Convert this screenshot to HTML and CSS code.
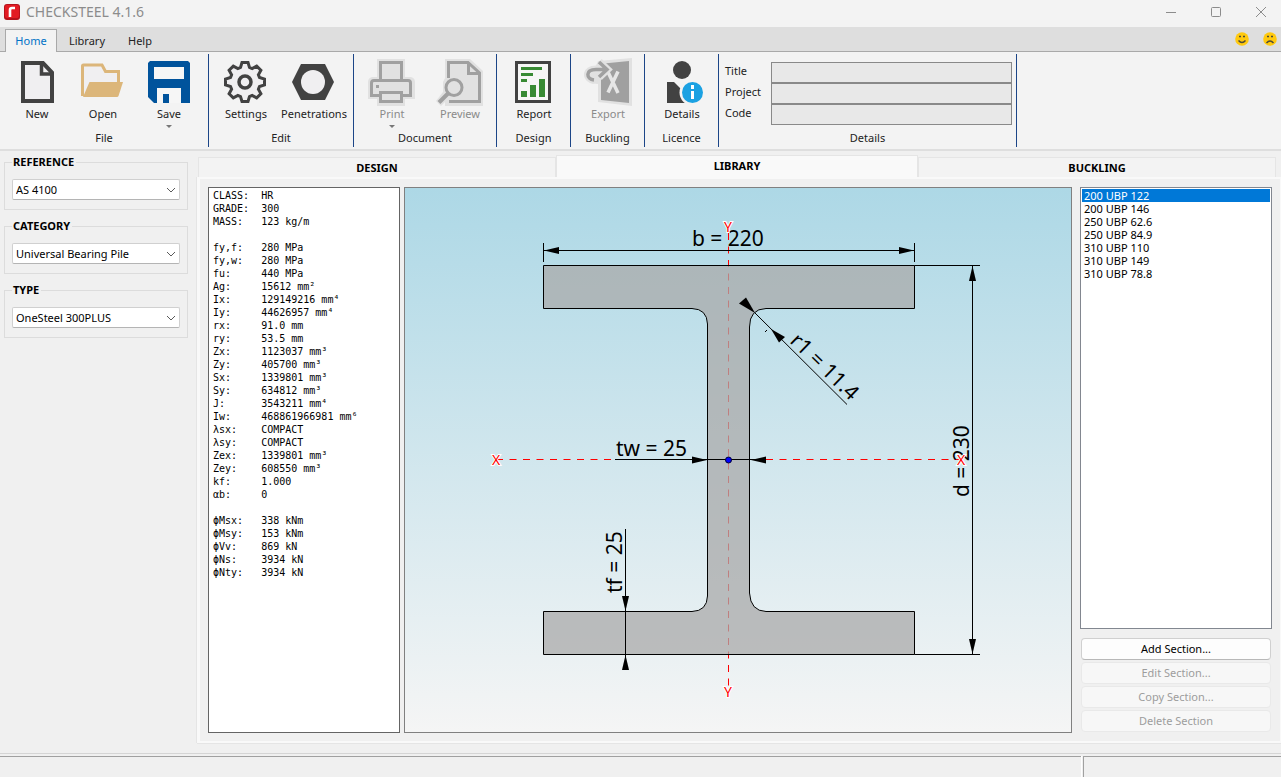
FILE: index.html
```html
<!DOCTYPE html>
<html lang="en">
<head>
<meta charset="utf-8">
<title>CHECKSTEEL 4.1.6</title>
<link rel="stylesheet" href="styles.css">
</head>
<body>
<header class="titlebar">
  <svg class="app-icon" width="16" height="16" viewBox="0 0 16 16" aria-hidden="true"><rect width="16" height="16" rx="3" fill="#b5121b"/><rect x="1" y="1" width="14" height="13" rx="2" fill="#e31b23"/><path d="M6 13V6Q6 4 8 4H11" fill="none" stroke="#fff" stroke-width="2.6"/></svg>
  <h1 class="title">CHECKSTEEL 4.1.6</h1>
  <div class="window-buttons">
    <button class="window-button" aria-label="Minimize"><svg width="12" height="12" viewBox="0 0 12 12"><path d="M1 6.500H11"/></svg></button>
    <button class="window-button" aria-label="Maximize"><svg width="12" height="12" viewBox="0 0 12 12"><rect x="1.500" y="1.500" width="9" height="9" rx="1"/></svg></button>
    <button class="window-button" aria-label="Close"><svg width="12" height="12" viewBox="0 0 12 12"><path d="M1 1L11 11M11 1L1 11"/></svg></button>
  </div>
</header>

<nav class="menu">
  <button class="menu-tab active">Home</button>
  <button class="menu-tab">Library</button>
  <button class="menu-tab">Help</button>
  <div class="feedback">
    <button class="face" aria-label="Happy"><svg width="14" height="14" viewBox="0 0 14 14"><circle cx="7" cy="7" r="6.800" fill="#ffc90e"/><path d="M4 4.500h2M8 4.500h2M3.500 8.500Q7 12.500 10.500 8.500" fill="none" stroke="#4a4a3a" stroke-width="1.400"/></svg></button>
    <button class="face" aria-label="Unhappy"><svg width="14" height="14" viewBox="0 0 14 14"><circle cx="7" cy="7" r="6.800" fill="#ffc90e"/><path d="M4 4.500h2M8 4.500h2M3.500 11Q7 7 10.500 11" fill="none" stroke="#4a4a3a" stroke-width="1.400"/></svg></button>
  </div>
</nav>

<section class="ribbon">
  <div class="group">
    <div class="tools tight">
      <button class="tool"><svg class="icon" viewBox="0 0 48 48"><path d="M10 5H30L39 14.500V43H10Z" fill="#f0eff1" stroke="#424242" stroke-width="4"/><path d="M28.500 5V16H39" fill="none" stroke="#424242" stroke-width="3.500"/></svg><span>New</span></button>
      <button class="tool"><svg class="icon" viewBox="0 0 48 48"><path d="M3.500 38V8Q3.500 7 4.500 7H23L26.500 13.500H39.500V25" fill="#f0eff1" stroke="#dcb67a" stroke-width="3"/><path d="M10.500 24H44L39.500 38Q39 39 38 39H4Z" fill="#dcb67a"/></svg><span>Open</span></button>
      <button class="tool"><svg class="icon" viewBox="0 0 48 48"><path d="M5 3H43L45 5V45H9L3 39V5Z" fill="#00539c"/><path d="M9 9H39V21H9ZM12 30H36V45H24V36H18V45H12Z" fill="#f6f6f6"/></svg><span>Save</span><i class="drop"></i></button>
    </div>
    <div class="group-name">File</div>
  </div>
  <div class="group">
    <div class="tools wide">
      <button class="tool"><svg class="icon" viewBox="0 0 48 48"><g transform="translate(23 24)" fill="#f0eff1" stroke="#424242"><path stroke-width="3" d="M-3-19.500H3L4.500-14.500 7.100-13.400 11.700-15.900 15.900-11.700 13.400-7.100 14.500-4.500 19.500-3V3L14.500 4.500 13.400 7.100 15.900 11.700 11.700 15.900 7.100 13.400 4.500 14.500 3 19.500H-3L-4.500 14.500-7.100 13.400-11.700 15.900-15.900 11.700-13.400 7.100-14.500 4.500-19.500 3V-3L-14.500-4.500-13.400-7.100-15.900-11.700-11.700-15.900-7.100-13.400-4.500-14.500Z"/><circle r="6" stroke-width="3.500"/></g></svg><span>Settings</span></button>
      <button class="tool"><svg class="icon" viewBox="0 0 48 48"><path d="M2 24L11 6H35L44 24 35 42H11Z" fill="#424242"/><circle cx="23" cy="24" r="12" fill="#f0eff1"/></svg><span>Penetrations</span></button>
    </div>
    <div class="group-name">Edit</div>
  </div>
  <div class="group">
    <div class="tools inset">
      <button class="tool" disabled><svg class="icon" viewBox="0 0 48 48"><path d="M9 1H37V19H43Q47 20 47 24V41H37V48H9V41H0V24Q0 20 4 19H9Z" fill="#e1e1e1"/><g fill="none" stroke="#a0a0a0" stroke-width="3"><path d="M12.500 22V4.500H33.500V22"/><path d="M12.500 37.500H3.500V25Q3.500 22.500 6 22.500H40Q42.500 22.500 42.500 25V37.500H33.500"/><rect x="12.500" y="34.500" width="21" height="9"/></g><path d="M8 27h3v3H8z" fill="#a0a0a0"/></svg><span>Print</span><i class="drop"></i></button>
      <button class="tool" disabled><svg class="icon" viewBox="0 0 48 48"><path d="M9 1H34L47 13V48H9V44L5 48 0 43 7 34V24L9 20Z" fill="#e1e1e1"/><g fill="none" stroke="#a0a0a0" stroke-width="3"><path d="M12.500 20V4.500H32L43.500 15V43.500H13"/><path d="M32.500 4.500V15.500H43.500"/><circle cx="18" cy="29.500" r="8"/><path stroke-width="4" d="M12 35.500L3 44.500"/></g></svg><span>Preview</span></button>
    </div>
    <div class="group-name">Document</div>
  </div>
  <div class="group">
    <div class="tools">
      <button class="tool"><svg class="icon" viewBox="0 0 48 48"><rect x="6.500" y="4.500" width="33" height="39" fill="#f6f6f6" stroke="#424242" stroke-width="3"/><path fill="#388a34" d="M11 9h21v3H11zM11 15h12v3H11zM11 21h6v3h-6zM11 33h6v6h-6zM20 27h6v12h-6zM29 21h6v18h-6z"/></svg><span>Report</span></button>
    </div>
    <div class="group-name">Design</div>
  </div>
  <div class="group">
    <div class="tools">
      <button class="tool" disabled><svg class="icon" viewBox="0 0 48 48"><path d="M14 3L48 0V48L14 44V26Q2 26 2 16 4 8 12 8Z" fill="#e1e1e1"/><path d="M17 16L25 11 20 5.500 45 3V45L17 42Z" fill="#a0a0a0"/><path d="M24 14L34 35M34 13.500L24 34.500" stroke="#e6e6e6" stroke-width="3.500"/><path d="M10 22C2 21 1 11.500 12 11.500H23M15 4L23 11.500 15 19" fill="none" stroke="#e1e1e1" stroke-width="8"/><path d="M10 22C2 21 1 11.500 12 11.500H23M15 4L23 11.500 15 19" fill="none" stroke="#a0a0a0" stroke-width="3.500"/></svg><span>Export</span></button>
    </div>
    <div class="group-name">Buckling</div>
  </div>
  <div class="group">
    <div class="tools">
      <button class="tool"><svg class="icon" viewBox="0 0 48 48"><circle cx="24" cy="12" r="9" fill="#424242"/><path d="M9 24H16L24 32 32 24H38V45H9Z" fill="#424242"/><circle cx="34.500" cy="34.500" r="13" fill="#f3f3f3"/><circle cx="34.500" cy="34.500" r="10.500" fill="#1ba1e2"/><path d="M33 27h3v4h-3zM33 33h3v8h-3z" fill="#fff"/></svg><span>Details</span></button>
    </div>
    <div class="group-name">Licence</div>
  </div>
  <div class="group details">
    <div class="fields">
      <label for="f-title">Title</label><input id="f-title" type="text">
      <label for="f-project">Project</label><input id="f-project" type="text">
      <label for="f-code">Code</label><input id="f-code" type="text">
    </div>
    <div class="group-name">Details</div>
  </div>
</section>

<main class="workspace">
  <aside class="filters">
    <fieldset class="filter">
      <legend>REFERENCE</legend>
      <div class="combo"><select aria-label="Reference"><option>AS 4100</option></select><svg class="chevron" width="10" height="6" viewBox="0 0 10 6"><path d="M1 1L5 5 9 1"/></svg></div>
    </fieldset>
    <fieldset class="filter">
      <legend>CATEGORY</legend>
      <div class="combo"><select aria-label="Category"><option>Universal Bearing Pile</option></select><svg class="chevron" width="10" height="6" viewBox="0 0 10 6"><path d="M1 1L5 5 9 1"/></svg></div>
    </fieldset>
    <fieldset class="filter">
      <legend>TYPE</legend>
      <div class="combo"><select aria-label="Type"><option>OneSteel 300PLUS</option></select><svg class="chevron" width="10" height="6" viewBox="0 0 10 6"><path d="M1 1L5 5 9 1"/></svg></div>
    </fieldset>
  </aside>

  <div class="notebook">
    <div class="tabs">
      <button class="tab">DESIGN</button>
      <button class="tab active">LIBRARY</button>
      <button class="tab">BUCKLING</button>
    </div>
    <div class="page">
      <pre class="properties">CLASS:  HR
GRADE:  300
MASS:   123 kg/m

fy,f:   280 MPa
fy,w:   280 MPa
fu:     440 MPa
Ag:     15612 mm²
Ix:     129149216 mm⁴
Iy:     44626957 mm⁴
rx:     91.0 mm
ry:     53.5 mm
Zx:     1123037 mm³
Zy:     405700 mm³
Sx:     1339801 mm³
Sy:     634812 mm³
J:      3543211 mm⁴
Iw:     468861966981 mm⁶
λsx:    COMPACT
λsy:    COMPACT
Zex:    1339801 mm³
Zey:    608550 mm³
kf:     1.000
αb:     0

ϕMsx:   338 kNm
ϕMsy:   153 kNm
ϕVv:    869 kN
ϕNs:    3934 kN
ϕNty:   3934 kN</pre>

      <div class="canvas">
        <svg class="drawing" viewBox="405 188 666 544" role="img" aria-label="Section drawing">
          <g class="axis">
            <path d="M728.500 233V687"/>
            <path d="M496 459.500H961"/>
          </g>
          <path class="section" d="M543.500 265.500H914.500V308.500H766Q749.500 309 749.500 327V593Q750.500 611 766 611.500H914.500V654.500H543.500V611.500H692Q707 611 707.500 596V324Q707 309 692 308.500H543.500Z"/>
          <g class="dimension">
            <path d="M543.500 243V262M914.500 243V262M543.500 250.500H914.500"/>
            <path d="M914.500 265.500H980M914.500 654.500H980M972.500 265.500V654.500"/>
            <path d="M625.500 529V668"/>
            <path d="M615 459.500H766"/>
            <path d="M755 313L847 404.500M765 332L767 330"/>
          </g>
          <g class="arrow">
            <path d="M544 250.500L559 247V254Z"/>
            <path d="M914 250.500L899 247V254Z"/>
            <path d="M972.500 266L969 281H976Z"/>
            <path d="M972.500 654L969 639H976Z"/>
            <path d="M625.500 611L622 596H629Z"/>
            <path d="M625.500 655L622 670H629Z"/>
            <path d="M707 460L692 456.500V463.500Z"/>
            <path d="M751 460L766 456.500V463.500Z"/>
            <path d="M755 313L739 303.500 746 297.500Z"/>
            <path d="M771 329L779 342.500 785 337Z"/>
          </g>
          <g class="measure">
            <text x="692" y="246">b = 220</text>
            <text x="616" y="456">tw = 25</text>
            <text transform="translate(969 497) rotate(-90)">d = 230</text>
            <text transform="translate(622 593) rotate(-90)">tf = 25</text>
            <text transform="translate(789 342) rotate(44)">r1 = 11.4</text>
          </g>
          <circle cx="728.500" cy="460" r="3" fill="#00f" stroke="#003" stroke-width="1"/>
          <g class="axis-name">
            <text x="728" y="232">Y</text>
            <text x="728" y="697">Y</text>
            <text x="496" y="465">X</text>
            <text x="961" y="465">X</text>
          </g>
        </svg>
      </div>

      <div class="sections">
        <ul class="section-list">
          <li class="selected">200 UBP 122</li>
          <li>200 UBP 146</li>
          <li>250 UBP 62.6</li>
          <li>250 UBP 84.9</li>
          <li>310 UBP 110</li>
          <li>310 UBP 149</li>
          <li>310 UBP 78.8</li>
        </ul>
        <div class="actions">
          <button class="action">Add Section...</button>
          <button class="action" disabled>Edit Section...</button>
          <button class="action" disabled>Copy Section...</button>
          <button class="action" disabled>Delete Section</button>
        </div>
      </div>
    </div>
  </div>
</main>

<footer class="statusbar">
  <div class="status-cell main-cell"></div>
  <div class="status-cell side-cell"></div>
</footer>
</body>
</html>
```
FILE: styles.css
```css
* { box-sizing: border-box; }

body {
  margin: 0;
  min-height: 100vh;
  display: flex;
  flex-direction: column;
  background: #f0f0f0;
  color: #000;
  font: 11px/16px "Noto Sans", "Open Sans", sans-serif;
}

button, input, select { font: inherit; color: inherit; margin: 0; }
button { padding: 0; border: 0; background: none; }
svg { display: block; }

/* Title bar */
.titlebar {
  display: flex;
  align-items: center;
  height: 27px;
  padding: 0 0 4px 4px;
  background: #f3f3f3;
}
.title {
  flex: 1;
  margin: 0 0 0 6px;
  font-size: 14px;
  font-weight: 400;
  line-height: 20px;
  color: #8c8c8c;
}
.window-buttons { display: flex; margin-right: -2px; }
.window-button { width: 45px; display: flex; justify-content: center; }
.window-button svg { fill: none; stroke: #8c8c8c; stroke-width: 1; }

/* Menu tabs */
.menu {
  display: flex;
  align-items: flex-end;
  height: 25px;
  padding-left: 5px;
  background: #dedede;
  box-shadow: inset 0 -1px #a9a9a9;
}
.menu-tab { height: 23px; padding: 0 11px 0 12px; color: #222; }
.menu-tab.active {
  width: 52px;
  padding: 0;
  border: 1px solid #a9a9a9;
  border-bottom: 0;
  background: #f3f3f3;
  color: #0072c6;
}
.feedback { display: flex; gap: 14px; margin-left: auto; padding: 0 4px 6px 0; }

/* Ribbon */
.ribbon {
  display: flex;
  padding: 2px 0;
  background: #f3f3f3;
  border-bottom: 2px solid #dedede;
}
.group {
  display: flex;
  flex-direction: column;
  height: 93px;
  padding-top: 4px;
  border-right: 1px solid #1c4587;
}
.tools { display: flex; gap: 2px; height: 72px; padding: 0 3px 0 4px; }
.tools.tight { gap: 0; padding-right: 6px; }
.tools.wide { padding-right: 6px; }
.tools.inset { padding-left: 5px; }
.tool {
  display: flex;
  flex-direction: column;
  align-items: center;
  width: 66px;
  line-height: 16px;
  white-space: nowrap;
  color: #222;
}
.tool:disabled { color: #8a8a8a; }
.icon { width: 48px; height: 48px; }
.drop {
  margin-top: 3px;
  border: 3px solid transparent;
  border-top-color: #777;
  border-bottom: 0;
}
.group-name { text-align: center; color: #222; }
.details { width: 298px; }
.fields {
  display: grid;
  grid-template-columns: 46px 1fr;
  height: 72px;
  padding: 4px 4px 5px 6px;
  line-height: 18px;
  color: #222;
}
.fields input {
  width: 100%;
  height: 21px;
  padding: 0 4px;
  border: 1px solid #898989;
  border-radius: 0;
  background: #e8e8e8;
}

/* Work area */
.workspace { flex: 1; display: flex; padding-bottom: 10px; }
.filters {
  flex: none;
  display: flex;
  flex-direction: column;
  gap: 8px;
  width: 196px;
  padding: 3px 8px 0 4px;
}
.filter {
  min-width: 0;
  margin: 0;
  padding: 9px 7px;
  border: 1px solid #dcdcdc;
}
.filter legend { padding: 0 2px 0 1px; font-weight: 700; }
.combo { position: relative; }
.combo select {
  display: block;
  width: 100%;
  height: 21px;
  padding: 0 20px 0 3px;
  appearance: none;
  border: 1px solid #d0d0d0;
  border-bottom-color: #b4b4b4;
  border-radius: 2px;
  background: #fff;
}
.chevron {
  position: absolute;
  right: 4px;
  top: 8px;
  fill: none;
  stroke: #5a5a5a;
  pointer-events: none;
}

/* Notebook */
.notebook { flex: 1; display: flex; flex-direction: column; min-width: 0; padding-top: 4px; }
.tabs { display: flex; align-items: flex-end; padding: 0 5px 0 2px; }
.tab {
  flex: 1;
  height: 20px;
  border: 1px solid #e5e5e5;
  border-bottom: 0;
  background: #f3f3f3;
  font-weight: 700;
}
.tab.active {
  flex: 1 1 6px;
  height: 22px;
  padding-bottom: 2px;
  background: #f9f9f9;
}
.page {
  flex: 1;
  display: grid;
  grid-template-columns: 192px minmax(0, 1fr) 192px;
  column-gap: 4px;
  padding: 8px 12px 8px 8px;
  border: 1px solid #f9f9f9;
  border-width: 2px 1px 2px 3px;
  margin-left: 1px;
  box-shadow: -1px 0 #e5e5e5, 0 1px #e5e5e5;
}
.properties {
  margin: 0;
  padding: 1px 4px;
  border: 1px solid #646464;
  background: #fff;
  font: 10px/13px "DejaVu Sans Mono", "Liberation Mono", monospace;
  overflow: hidden;
}
.canvas {
  position: relative;
  border: 1px solid #808080;
  background: linear-gradient(#add8e6, #f5f5f5);
}
.drawing { position: absolute; inset: 0; width: 100%; height: 100%; }
.axis path { stroke: #f00; stroke-dasharray: 7 6.5; fill: none; }
.section { fill: #a9a9a9; fill-opacity: .75; stroke: #000; }
.dimension path { fill: none; stroke: #000; }
.measure { font-size: 21px; }
.axis-name {
  font-size: 14px;
  text-anchor: middle;
  fill: #f00;
  stroke: #fff;
  stroke-width: 2px;
  paint-order: stroke;
}

.sections { display: flex; flex-direction: column; gap: 9px; margin: 0 -4px 0 4px; }
.section-list {
  flex: 1;
  margin: 0;
  padding: 1px;
  border: 1px solid #828790;
  background: #fff;
  list-style: none;
  line-height: 13px;
}
.section-list li { padding-left: 2px; }
.section-list .selected { background: #0078d7; color: #fff; }
.actions { display: flex; flex-direction: column; gap: 2px; padding: 0 1px 1px; }
.action {
  height: 22px;
  border: 1px solid #d0d0d0;
  border-bottom-color: #b8b8b8;
  border-radius: 4px;
  background: #fdfdfd;
}
.action:disabled { border-color: #e9e9e9; background: #f7f7f7; color: #9d9d9d; }

/* Status bar */
.statusbar {
  display: flex;
  gap: 2px;
  height: 24px;
  padding-top: 2px;
  border-top: 1px solid #d5d5d5;
}
.status-cell { border-top: 1px solid #a0a0a0; }
.main-cell { flex: 1; box-shadow: 1px 0 #fff; }
.side-cell { width: 198px; border-left: 1px solid #a0a0a0; }
```
